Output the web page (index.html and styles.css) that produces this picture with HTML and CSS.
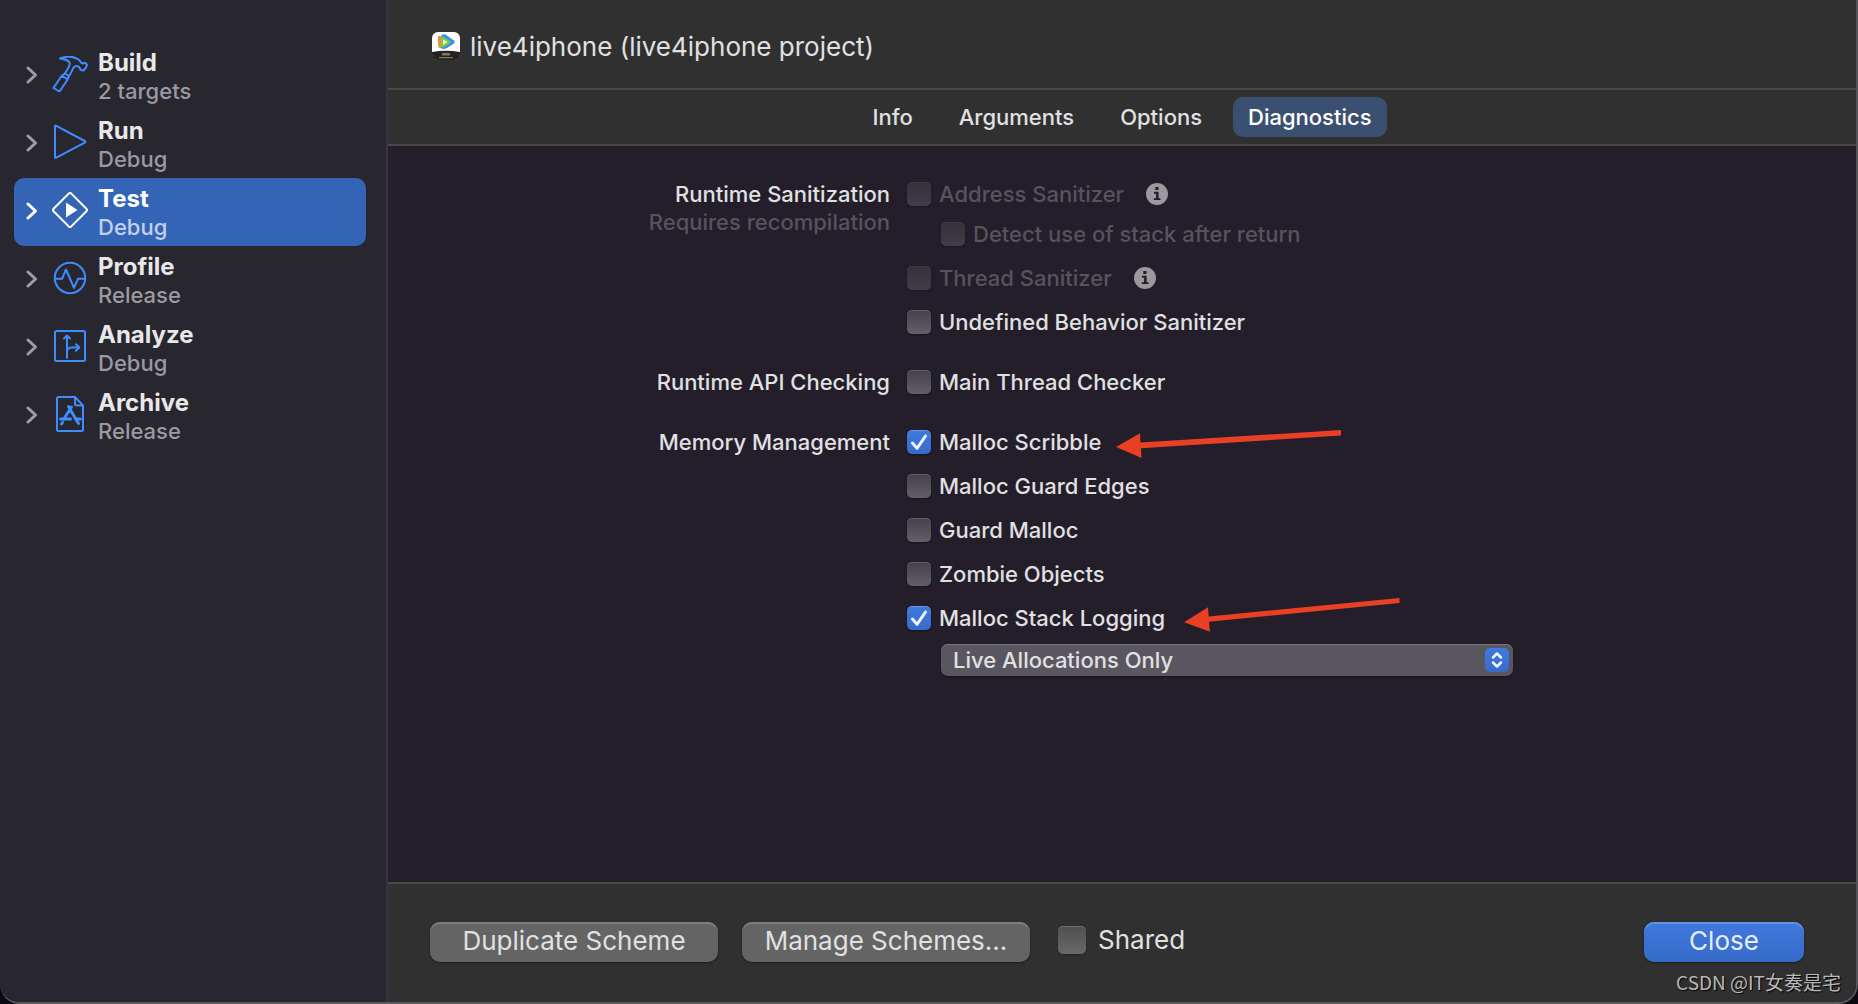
FILE: index.html
```html
<!DOCTYPE html>
<html lang="en">
<head>
<meta charset="utf-8">
<title>Edit Scheme</title>
<link rel="stylesheet" href="styles.css">
</head>
<body>
<div class="window">
  <nav class="sidebar" aria-label="Scheme actions">
    <a class="action" href="#build">
      <svg class="chevron" viewBox="0 0 12 18" aria-hidden="true"><path d="M2 2l7.500 7L2 16"/></svg>
      <svg class="icon" viewBox="0 0 36 36" aria-hidden="true"><path d="M8 2.500C14 .2 21.500.2 26.500 3.500C28.500 5 28.600 7 30.500 7.500L33 6.700L35 8.700L34 11.500L31.500 14.500L28.700 14L27.500 11.500C25.500 9.300 23.500 10 22 11.200C20 14 19.300 17 16.800 20.500L15.300 24L7.500 35.500L1.500 32L9.500 20L12.800 17.500C15 14 17.500 11 17.800 7.500C17.500 4 13 3.500 8 2.500ZM10 20L15.500 23.200M13 17.500L17 20"/></svg>
      <span class="labels"><strong>Build</strong><span>2 targets</span></span>
    </a>
    <a class="action" href="#run">
      <svg class="chevron" viewBox="0 0 12 18" aria-hidden="true"><path d="M2 2l7.500 7L2 16"/></svg>
      <svg class="icon" viewBox="0 0 36 36" aria-hidden="true"><path d="M3 2.500Q3 1.200 4.300 1.800L32.800 17Q34 17.800 32.800 18.600L4.300 33.700Q3 34.400 3 33Z"/></svg>
      <span class="labels"><strong>Run</strong><span>Debug</span></span>
    </a>
    <a class="action selected" href="#test" aria-current="page">
      <svg class="chevron" viewBox="0 0 12 18" aria-hidden="true"><path d="M2 2l7.500 7L2 16"/></svg>
      <svg class="icon" viewBox="0 0 36 36" aria-hidden="true"><path d="M16.700 1.600Q18 .4 19.300 1.600L34.400 16.700Q35.600 18 34.400 19.300L19.300 34.400Q18 35.600 16.700 34.400L1.600 19.300Q.4 18 1.600 16.700Z"/><path class="solid" d="M14 10.500L25.500 18L14 25.500Z"/></svg>
      <span class="labels"><strong>Test</strong><span>Debug</span></span>
    </a>
    <a class="action" href="#profile">
      <svg class="chevron" viewBox="0 0 12 18" aria-hidden="true"><path d="M2 2l7.500 7L2 16"/></svg>
      <svg class="icon" viewBox="0 0 36 36" aria-hidden="true"><circle cx="18" cy="18" r="15.200"/><path d="M2.800 18.800H10L14 9.500L22 27.800L26 18.800H33"/></svg>
      <span class="labels"><strong>Profile</strong><span>Release</span></span>
    </a>
    <a class="action" href="#analyze">
      <svg class="chevron" viewBox="0 0 12 18" aria-hidden="true"><path d="M2 2l7.500 7L2 16"/></svg>
      <svg class="icon" viewBox="0 0 36 36" aria-hidden="true"><rect x="3" y="3" width="30" height="30" rx="1.500"/><path d="M15 30V8M12 10.500L15 7.500L18 10.500M15 24Q15 19.500 20 19.500H27M24 16.200L27.300 19.500L24 22.800"/></svg>
      <span class="labels"><strong>Analyze</strong><span>Debug</span></span>
    </a>
    <a class="action" href="#archive">
      <svg class="chevron" viewBox="0 0 12 18" aria-hidden="true"><path d="M2 2l7.500 7L2 16"/></svg>
      <svg class="icon" viewBox="0 0 36 36" aria-hidden="true"><path d="M6.500 1H23L31 9.500V33.500Q31 35 29.500 35H6.500Q5 35 5 33.500V2.500Q5 1 6.500 1ZM23 1V8Q23 9.500 24.500 9.500H31"/><path class="thick" d="M19.500 11L11.500 23.500M16.500 10.500L18 13M18.500 14L26.500 27.500M8.500 23H18.500M23.500 23H28.500M10.500 26.500L9.500 28"/></svg>
      <span class="labels"><strong>Archive</strong><span>Release</span></span>
    </a>
  </nav>

  <main class="pane">
    <header class="title">
      <svg class="app-icon" viewBox="0 0 28 28" aria-hidden="true">
        <rect width="28" height="28" rx="6" fill="#fff"/>
        <path d="M0 20Q14 17.500 28 20V22Q28 28 22 28H6Q0 28 0 22Z" fill="#26231f"/>
        <path d="M6 4.500Q7.500 3 9.500 4.500V15.500Q7.500 16.500 6.500 15Q5.500 10 6 4.500Z" fill="#f08a3c"/>
        <path d="M9.500 3Q12 1.500 15 3.500L22 8.500Q23.500 10 22 11.500L15 16Q11 18 9 16Z" fill="#3c8ef0"/>
        <path d="M9 5.500Q11 4.500 13 6L18 9Q19 10 18 11L13 14.500Q10 16 8.500 14.500Z" fill="#6fd42e"/>
        <path d="M11 7.500L15.500 10L11 12.800Z" fill="#fff"/>
        <path d="M10 21H18V23.500H10ZM7 25H21V26.300H7Z" fill="#7d7562"/>
      </svg>
      <h1>live4iphone (live4iphone project)</h1>
    </header>

    <nav class="tabs" aria-label="Scheme settings">
      <button type="button" class="tab">Info</button>
      <button type="button" class="tab">Arguments</button>
      <button type="button" class="tab">Options</button>
      <button type="button" class="tab active">Diagnostics</button>
    </nav>

    <form class="settings">
      <section class="group">
        <h2 class="heading">Runtime Sanitization<small>Requires recompilation</small></h2>
        <div class="fields">
          <div class="option">
            <label class="choice"><input type="checkbox" disabled>Address Sanitizer</label>
            <svg class="info" viewBox="0 0 22 22" role="img" aria-label="About Address Sanitizer"><circle cx="11" cy="11" r="11"/><path d="M9.300 4h3.200v3H9.300zM8 8.800h4.600v6.400h1.900v1.900H7.800v-1.900h2.300v-4.500H8z"/></svg>
          </div>
          <div class="option nested">
            <label class="choice"><input type="checkbox" disabled>Detect use of stack after return</label>
          </div>
          <div class="option">
            <label class="choice"><input type="checkbox" disabled>Thread Sanitizer</label>
            <svg class="info" viewBox="0 0 22 22" role="img" aria-label="About Thread Sanitizer"><circle cx="11" cy="11" r="11"/><path d="M9.300 4h3.200v3H9.300zM8 8.800h4.600v6.400h1.900v1.900H7.800v-1.900h2.300v-4.500H8z"/></svg>
          </div>
          <div class="option">
            <label class="choice"><input type="checkbox">Undefined Behavior Sanitizer</label>
          </div>
        </div>
      </section>

      <section class="group">
        <h2 class="heading">Runtime API Checking</h2>
        <div class="fields">
          <div class="option">
            <label class="choice"><input type="checkbox">Main Thread Checker</label>
          </div>
        </div>
      </section>

      <section class="group">
        <h2 class="heading">Memory Management</h2>
        <div class="fields">
          <div class="option">
            <label class="choice"><input type="checkbox" checked>Malloc Scribble</label>
            <svg class="arrow arrow-scribble" viewBox="0 0 228 30" aria-hidden="true"><path d="M1 17L25 3.300L25.500 12.600L226 0V5.500L26 18.300L26.500 28Z"/></svg>
          </div>
          <div class="option">
            <label class="choice"><input type="checkbox">Malloc Guard Edges</label>
          </div>
          <div class="option">
            <label class="choice"><input type="checkbox">Guard Malloc</label>
          </div>
          <div class="option">
            <label class="choice"><input type="checkbox">Zombie Objects</label>
          </div>
          <div class="option">
            <label class="choice"><input type="checkbox" checked>Malloc Stack Logging</label>
            <svg class="arrow arrow-logging" viewBox="0 0 228 36" aria-hidden="true"><path d="M1 25.300L25 10.200L25.700 19.500L216.500 1V6L26 24.700L27 34.800Z"/></svg>
          </div>
          <div class="popup">
            <select aria-label="Malloc stack logging mode">
              <option>Live Allocations Only</option>
              <option>All Allocation and Free History</option>
            </select>
            <svg class="stepper" viewBox="0 0 24 24" aria-hidden="true"><path d="M8 9.500L12 5.500L16 9.500M8 14.500L12 18.500L16 14.500"/></svg>
          </div>
        </div>
      </section>
    </form>

    <footer class="footer">
      <button type="button" class="button">Duplicate Scheme</button>
      <button type="button" class="button">Manage Schemes...</button>
      <label class="shared"><input type="checkbox">Shared</label>
      <button type="button" class="button primary">Close</button>
    </footer>
  </main>
  <span class="watermark">CSDN @IT女奏是宅</span>
</div>
</body>
</html>
```
FILE: styles.css
```css
* {
  box-sizing: border-box;
}

body {
  margin: 0;
  background: #0c0a10;
  color: #e1e0e2;
  font-family: Inter, "Noto Sans CJK SC", sans-serif;
  font-size: 22px;
  font-weight: 450;
  line-height: 28px;
}

button,
select,
input {
  margin: 0;
  border: 0;
  color: inherit;
  font: inherit;
}

.window {
  position: relative;
  display: flex;
  min-height: 100vh;
  overflow: hidden;
  border-right: 2px solid #555457;
  border-bottom: 2px solid #5a595c;
  border-radius: 0 0 20px 20px;
  background: #231e29;
}

/* Sidebar */

.sidebar {
  flex: none;
  width: 388px;
  padding: 42px 20px 20px 14px;
  border-right: 2px solid #37343d;
  background: #28262f;
}

.action {
  display: flex;
  align-items: center;
  height: 68px;
  padding: 0 12px 2px;
  border-radius: 10px;
  color: #e9e8e9;
  text-decoration: none;
}

.chevron {
  flex: none;
  width: 12px;
  height: 18px;
  fill: none;
  stroke: #9f9da2;
  stroke-width: 3;
  stroke-linecap: round;
  stroke-linejoin: round;
}

.icon {
  flex: none;
  width: 36px;
  height: 36px;
  margin: 0 10px 2px 14px;
  fill: none;
  stroke: #3f8cff;
  stroke-width: 2;
  stroke-linecap: round;
  stroke-linejoin: round;
}

.icon .thick {
  stroke-width: 3;
}

.icon .solid {
  fill: #fff;
  stroke: none;
}

.labels {
  display: flex;
  flex-direction: column;
  padding-top: 4px;
  color: #9c9aa1;
}

.labels strong {
  color: #e9e8e9;
  font-size: 24px;
  font-weight: 650;
}

.selected {
  background: #3364b5;
}

.selected .chevron,
.selected .icon {
  stroke: #fff;
}

.selected .labels {
  color: #c2d0e9;
}

.selected strong {
  color: #fff;
}

/* Right pane */

.pane {
  display: flex;
  flex: 1;
  flex-direction: column;
  min-width: 0;
}

.title {
  display: flex;
  align-items: center;
  gap: 10px;
  height: 90px;
  padding: 4px 44px 0;
  border-bottom: 2px solid #484a48;
  background: #303030;
}

.app-icon {
  width: 28px;
  height: 28px;
}

.title h1 {
  margin: 0;
  padding-top: 2px;
  font-size: 26px;
  font-weight: 400;
}

.tabs {
  display: flex;
  align-items: center;
  justify-content: center;
  gap: 16px;
  height: 56px;
  border-bottom: 2px solid #484a48;
  background: #303030;
}

.tab {
  height: 40px;
  padding: 0 15px;
  border-radius: 10px;
  background: none;
}

.tab.active {
  background: #3b5070;
  color: #fff;
}

.settings {
  display: flex;
  flex: 1;
  flex-direction: column;
  gap: 36px;
  padding: 36px 0;
}

.group {
  display: grid;
  grid-template-columns: 502fr 966fr;
}

.heading {
  height: 24px;
  margin: 0;
  font-size: 22px;
  font-weight: 450;
  line-height: 24px;
  text-align: right;
}

.heading small {
  display: block;
  color: #57535b;
  font-size: 22px;
  line-height: 32px;
}

.fields {
  display: flex;
  flex-direction: column;
  gap: 20px;
  padding-left: 17px;
}

.option {
  position: relative;
  display: flex;
  align-items: center;
  gap: 22px;
  height: 24px;
}

.choice,
.shared {
  display: flex;
  align-items: center;
  gap: 8px;
}

.choice:has(:disabled) {
  color: #57535c;
}

.nested {
  margin: -4px 0 0 34px;
}

[type="checkbox"] {
  flex: none;
  width: 24px;
  height: 24px;
  border-radius: 5px;
  appearance: none;
  background: linear-gradient(#45414b, #625f66);
  box-shadow: inset 0 1px #625f68, 0 1px 2px #0005;
}

[type="checkbox"]:disabled {
  background: linear-gradient(#35313b, #423e49);
  box-shadow: inset 0 1px #3d3943, 0 1px 2px #0004;
}

[type="checkbox"]:checked {
  background: url("data:image/svg+xml,%3Csvg xmlns='http://www.w3.org/2000/svg' viewBox='0 0 24 24'%3E%3Cpath d='M5.500 13L10 18.300L18.500 6' fill='none' stroke='%23eef3fd' stroke-width='3' stroke-linecap='round' stroke-linejoin='round'/%3E%3C/svg%3E"), linear-gradient(#4079e0, #366bc8);
  box-shadow: inset 0 1px #6b97e6, 0 1px 2px #0005;
}

.info {
  width: 22px;
  height: 22px;
  fill: #9b989e;
}

.info path {
  fill: #231e29;
}

.arrow {
  position: absolute;
  width: 228px;
  fill: #e83f25;
}

.arrow-scribble {
  top: 0;
  left: 208px;
}

.arrow-logging {
  top: -9px;
  left: 276px;
}

.popup {
  position: relative;
  width: 572px;
  max-width: 100%;
  margin: -6px 0 0 34px;
}

.popup select {
  display: block;
  width: 100%;
  height: 32px;
  padding: 0 40px 0 12px;
  border-radius: 7px;
  appearance: none;
  background: #5a565f;
  box-shadow: inset 0 1px #79767d, 0 1px 2px #0006;
  line-height: 28px;
}

.stepper {
  position: absolute;
  top: 4px;
  right: 4px;
  width: 24px;
  height: 24px;
  border-radius: 5px;
  background: linear-gradient(#4079e0, #366bc8);
  fill: none;
  stroke: #eef3fd;
  stroke-width: 2.500;
  stroke-linecap: round;
  stroke-linejoin: round;
  pointer-events: none;
}

/* Footer */

.footer {
  display: flex;
  align-items: center;
  gap: 24px;
  height: 120px;
  padding: 0 52px 2px 42px;
  border-top: 2px solid #484a48;
  background: #303030;
  font-size: 26px;
  font-weight: 400;
}

.button {
  width: 288px;
  height: 40px;
  padding: 0 0 2px;
  border-radius: 10px;
  background: #646464;
  box-shadow: inset 0 2px #7d7d7d, 0 1px 2px #0007;
}

.shared {
  gap: 12px;
  padding: 0 0 4px 4px;
}

.shared [type="checkbox"] {
  width: 28px;
  height: 28px;
  background: linear-gradient(#4f4f4f, #696969);
  box-shadow: inset 0 1px #6d6d6d, 0 1px 2px #0005;
}

.primary {
  width: 160px;
  margin-left: auto;
  background: linear-gradient(#4079e0, #366bc8);
  box-shadow: inset 0 2px #6492e3, 0 1px 2px #0007;
  color: #e6edfb;
}

.watermark {
  position: absolute;
  right: 15px;
  bottom: 6px;
  color: #b9b9b9;
  font-family: "Noto Sans CJK SC", sans-serif;
  font-size: 19px;
  font-weight: 400;
  text-shadow: 1px 1px 1px #000;
}
```
